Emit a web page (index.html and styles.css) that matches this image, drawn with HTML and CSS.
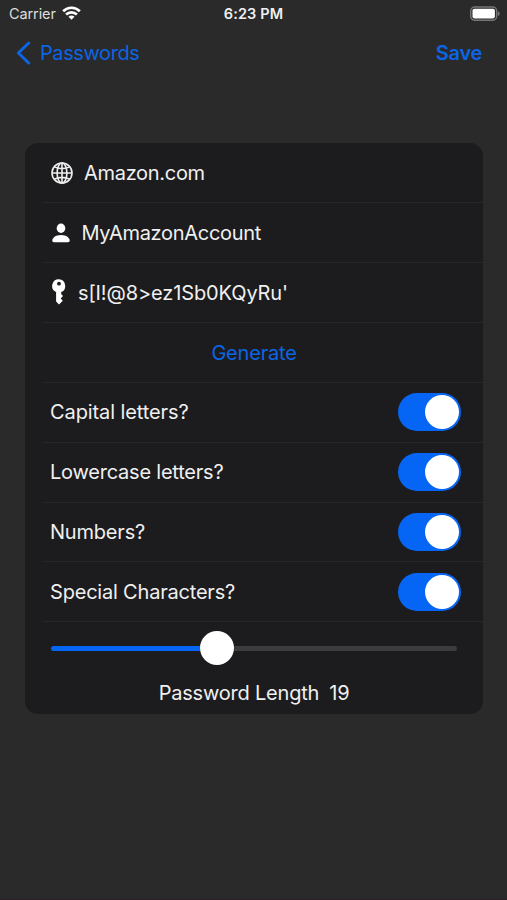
FILE: index.html
```html
<!DOCTYPE html>
<html lang="en">
<head>
<meta charset="utf-8">
<title>Passwords</title>
<link rel="stylesheet" href="styles.css">
</head>
<body>
<div class="screen">
  <header class="status">
    <div class="carrier"><span>Carrier</span>
      <svg class="wifi" width="19" height="14" viewBox="0 0 20 14" fill="none" stroke="#fff" stroke-width="2.8"><path d="M1.2 5.2C6.3 .2 13.7 .2 18.8 5.2M4.3 8.6c3.3-3.1 8.1-3.1 11.4 0"/><path d="M10 14 6.8 10.9c1.8-1.6 4.6-1.6 6.4 0z" fill="#fff" stroke="none"/></svg>
    </div>
    <div class="time">6:23 PM</div>
    <svg class="battery" width="31" height="16" viewBox="0 0 31 16"><rect x="1.7" y="1" width="26" height="13.2" rx="4" fill="none" stroke="#777" stroke-width="1.4"/><rect x="3.5" y="2.8" width="22.4" height="9.6" rx="1.8" fill="#fff"/><path d="M28.9 5.2c2.4.9 2.4 3.9 0 4.8z" fill="#777"/></svg>
  </header>
  <nav class="nav">
    <a class="back"><svg width="15" height="24" viewBox="0 0 15 24" fill="none" stroke="#0b65e5" stroke-width="3" stroke-linecap="round" stroke-linejoin="round"><path d="M12.7 2 2.4 12l10.3 10"/></svg><span>Passwords</span></a>
    <a class="save">Save</a>
  </nav>
  <main class="card">
    <div class="row">
      <svg class="globe" width="22" height="22" viewBox="0 0 22 22" fill="none" stroke="#eee" stroke-width="1.6"><circle cx="11" cy="11" r="10"/><ellipse cx="11" cy="11" rx="4.9" ry="10"/><path d="M11 1v20M1 11h20M3.5 4.9c4.2 2.3 10.8 2.3 15 0M3.5 17.1c4.2-2.3 10.8-2.3 15 0"/></svg>
      <span class="site">Amazon.com</span>
    </div>
    <div class="row">
      <svg class="person" width="18" height="20" viewBox="0 0 18 20" fill="#fff"><ellipse cx="9" cy="5.2" rx="4.3" ry="4.7"/><path d="M2.2 19.2C.8 19.2.3 18.5.3 17.5c0-2.6 3.2-5.6 8.7-5.6s8.7 3 8.7 5.6c0 1-.5 1.7-1.9 1.7z"/></svg>
      <span class="account">MyAmazonAccount</span>
    </div>
    <div class="row">
      <svg class="key" width="14" height="26" viewBox="0 0 14 26" fill="#fff"><path fill-rule="evenodd" d="M7 .3a6.7 6.7 0 0 0-2.9 12.8v9.3L7 25.5l3.8-3.7-2.1-2.4 2.3-2.4-1.8-1.9V13.1A6.7 6.7 0 0 0 7 .3zm0 2.5a1.9 1.9 0 1 1 0 3.8 1.9 1.9 0 0 1 0-3.8z"/></svg>
      <span class="secret">s[I!@8&gt;ez1Sb0KQyRu'</span>
    </div>
    <div class="row center"><span class="generate">Generate</span></div>
    <div class="row option"><span class="capital">Capital letters?</span><i class="toggle"></i></div>
    <div class="row option"><span class="lower">Lowercase letters?</span><i class="toggle"></i></div>
    <div class="row option"><span class="numbers">Numbers?</span><i class="toggle"></i></div>
    <div class="row option"><span class="special">Special Characters?</span><i class="toggle"></i></div>
    <div class="length">
      <div class="slider"><i class="fill"></i><i class="thumb"></i><i class="rest"></i></div>
      <div class="caption"><span class="label">Password Length</span><span>19</span></div>
    </div>
  </main>
</div>
</body>
</html>
```
FILE: styles.css
```css
* { box-sizing: border-box; }
body { margin: 0; background: #2a2a2a; }
.screen {
  height: 900px;
  border-bottom: 1px solid #2a2026;
  font: 20px/24px Inter, "Liberation Sans", sans-serif;
  letter-spacing: -0.2px;
  color: #f0f0f0;
}
.status {
  display: grid;
  grid-template-columns: 1fr auto 1fr;
  align-items: center;
  height: 28px;
  padding: 0 7px 0 9px;
  font-size: 14.5px;
  line-height: 18px;
}
.carrier { display: flex; align-items: center; gap: 6px; color: #ddd; letter-spacing: -0.1px; }
.wifi { margin-top: -2px; }
.time { margin-left: -2px; font-weight: 600; letter-spacing: 0.15px; }
.battery { justify-self: end; margin-top: -1px; }
.nav {
  display: flex;
  align-items: center;
  justify-content: space-between;
  height: 50px;
  padding: 0 25px 0 16px;
  color: #0b65e5;
}
.back { display: flex; align-items: center; gap: 9px; letter-spacing: -0.4px; }
.back svg { margin-top: -1px; }
.save { font-weight: 600; letter-spacing: -0.3px; }
.card {
  width: 458px;
  height: 571px;
  margin: 65px 0 0 25px;
  border-radius: 13px;
  background: #1c1c1e;
}
.row {
  display: flex;
  align-items: center;
  height: 59.85px;
  margin-left: 18px;
  padding: 1px 22px 0 7px;
  border-bottom: 1px solid #272729;
}
.row:first-child { height: 60.3px; }
.row.option { padding-top: 0; }
.row.center { justify-content: center; padding-right: 18px; padding-left: 0; }
.generate { color: #0b65e5; }
.globe { margin: 0 11px 0 1px; }
.person { margin: 0 12px 0 1.5px; }
.key { margin: -2px 12px 0 2px; }
.site { letter-spacing: -0.3px; }
.account { letter-spacing: -0.3px; }
.secret { letter-spacing: -0.12px; }
.capital { letter-spacing: -0.1px; }
.lower { letter-spacing: -0.22px; }
.toggle {
  width: 63px;
  height: 38px;
  margin-left: auto;
  padding: 2px;
  border-radius: 19px;
  background: #0566f5;
}
.toggle::after {
  content: "";
  display: block;
  width: 34px;
  height: 34px;
  margin-left: auto;
  border-radius: 50%;
  background: #fff;
}
.length { padding: 8.5px 26px 0; }
.slider { display: flex; align-items: center; height: 34px; }
.fill, .rest { height: 5px; margin-top: 2px; }
.fill { width: 149px; border-radius: 3px 0 0 3px; background: #0566f5; }
.thumb { width: 34px; height: 34px; border-radius: 50%; background: #fff; }
.rest { flex: 1; border-radius: 0 3px 3px 0; background: #3c3c3e; }
.caption { display: flex; justify-content: center; gap: 10px; margin-top: 16px; }
```
